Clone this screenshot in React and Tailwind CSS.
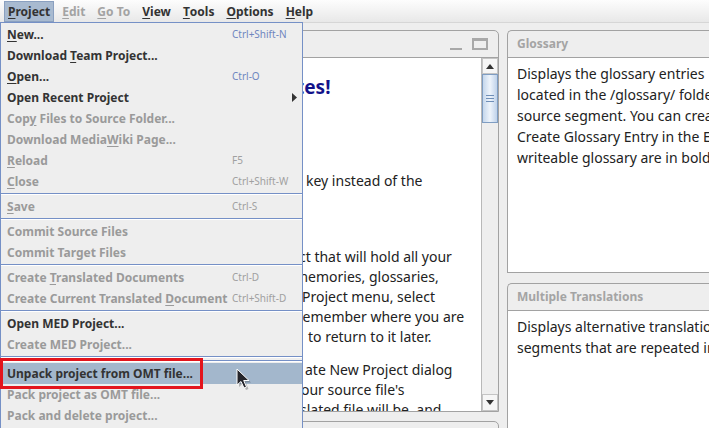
import React from "react";

const U = ({ children }) => (
  <span className="underline decoration-1 underline-offset-2">{children}</span>
);

function Item({ label, sc, dis, arrow, hl }) {
  return (
    <div className={`flex h-[21px] items-center pl-[6px] ${hl ? "bg-[#a3b7cc]" : ""}`}>
      <div
        className={`flex-1 whitespace-nowrap text-[12px] font-bold ${
          dis ? "text-[#9a9a9a]" : "text-[#333333]"
        }`}
      >
        {label}
      </div>
      <div
        className={`flex w-[70px] items-center whitespace-nowrap text-[10px] ${
          dis ? "text-[#a0a0a0]" : "text-[#6f86bf]"
        }`}
      >
        {sc}
        {arrow && (
          <svg width="6" height="9" viewBox="0 0 6 9" className="ml-[60px]">
            <path d="M0 0 L5 4.5 L0 9 Z" fill="#333" />
          </svg>
        )}
      </div>
    </div>
  );
}

const Sep = () => (
  <div className="flex h-[4px] flex-col justify-center">
    <div className="h-px bg-[#7590c6]" />
    <div className="h-px bg-white" />
  </div>
);

function Menu() {
  return (
    <div className="absolute left-0 top-[22px] h-[420px] w-[303px] border-x border-t border-[#7590c6] bg-[#eeeeee] pt-px">
      <Item label={<><U>N</U>ew...</>} sc="Ctrl+Shift-N" />
      <Item label={<>Download <U>T</U>eam Project...</>} />
      <Item label={<><U>O</U>pen...</>} sc="Ctrl-O" />
      <Item label="Open Recent Project" arrow />
      <Item label={<>Cop<U>y</U> Files to Source Folder...</>} dis />
      <Item label={<>Download Media<U>W</U>iki Page...</>} dis />
      <Item label={<><U>R</U>eload</>} sc="F5" dis />
      <Item label={<><U>C</U>lose</>} sc="Ctrl+Shift-W" dis />
      <Sep />
      <Item label={<><U>S</U>ave</>} sc="Ctrl-S" dis />
      <Sep />
      <Item label="Commit Source Files" dis />
      <Item label="Commit Target Files" dis />
      <Sep />
      <Item label={<>Create <U>T</U>ranslated Documents</>} sc="Ctrl-D" dis />
      <Item label={<>Create Current Translated <U>D</U>ocument</>} sc="Ctrl+Shift-D" dis />
      <Sep />
      <Item label="Open MED Project..." />
      <Item label="Create MED Project..." dis />
      <Sep />
      <Sep />
      <Item label="Unpack project from OMT file..." hl />
      <Item label="Pack project as OMT file..." dis />
      <Item label="Pack and delete project..." dis />
    </div>
  );
}

function MenuBar() {
  const items = [
    { l: <><U>P</U>roject</>, on: true },
    { l: <><U>E</U>dit</>, dis: true },
    { l: <><U>G</U>o To</>, dis: true },
    { l: <><U>V</U>iew</> },
    { l: <><U>T</U>ools</> },
    { l: <><U>O</U>ptions</> },
    { l: <><U>H</U>elp</> },
  ];
  return (
    <div className="flex h-[23px] items-stretch border-b border-[#d6d6d6] bg-gradient-to-b from-[#fdfdfd] to-[#e8e8e8] pl-[4px] pt-px">
      {items.map((it, i) => (
        <div
          key={i}
          className={`flex h-[21px] items-center whitespace-nowrap px-[3px] text-[12px] font-bold ${
            it.on ? "border border-[#8aa0c0] bg-[#a8bad0] text-[#333333]" : "border border-transparent"
          } ${it.dis ? "text-[#a3a3a3]" : "text-[#333333]"} ${i > 0 ? "ml-[4px]" : ""}`}
        >
          {it.l}
        </div>
      ))}
    </div>
  );
}

function Line({ ml, children, mt = 0 }) {
  return (
    <div
      className="h-[20px] whitespace-nowrap text-[14px] leading-[20px] text-[#222222]"
      style={{ marginLeft: ml, marginTop: mt }}
    >
      {children}
    </div>
  );
}

function Scrollbar() {
  return (
    <div className="flex w-[17px] shrink-0 flex-col border-l border-[#b8b8b8] bg-[#eeeeee]">
      <div className="flex h-[16px] items-center justify-center border border-[#c4c4c4] bg-[#f6f6f6]">
        <svg width="8" height="5" viewBox="0 0 8 5">
          <path d="M0 5 L4 0 L8 5 Z" fill="#333" />
        </svg>
      </div>
      <div className="flex h-[49px] flex-col items-center justify-center gap-[2px] border border-[#7f9dc2] bg-gradient-to-r from-[#c5d7ec] via-[#eef4fb] to-[#bfd2ea]">
        <div className="h-px w-[8px] bg-[#6f8fb8]" />
        <div className="h-px w-[8px] bg-[#6f8fb8]" />
        <div className="h-px w-[8px] bg-[#6f8fb8]" />
      </div>
      <div className="flex-1" />
      <div className="flex h-[17px] items-center justify-center border border-[#c4c4c4] bg-[#f6f6f6]">
        <svg width="8" height="5" viewBox="0 0 8 5">
          <path d="M0 0 L4 5 L8 0 Z" fill="#333" />
        </svg>
      </div>
    </div>
  );
}

function Editor() {
  return (
    <div className="flex h-[382px] flex-col rounded-t-[5px] border border-[#a2a2a2] bg-[#eeeeee]">
      <div className="flex h-[27px] shrink-0 items-center justify-end gap-[10px] border-b border-[#a2a2a2] pr-[10px]">
        <div className="mt-[10px] h-[2px] w-[12px] bg-[#a8a8a8]" />
        <div className="h-[12px] w-[16px] border-2 border-t-[3px] border-[#a8a8a8]" />
      </div>
      <div className="flex flex-1 overflow-hidden bg-white">
        <div className="flex-1 overflow-hidden">
          <div
            className="mt-[15px] h-[28px] whitespace-nowrap text-[19px] font-bold leading-[28px] text-[#12128a]"
            style={{ marginLeft: 287 }}
          >
            tes!
          </div>
          <Line ml={297} mt={70}>
            key instead of the
          </Line>
          <Line ml={290} mt={56}>
            ct that will hold all your
          </Line>
          <Line ml={286}>memories, glossaries,</Line>
          <Line ml={293}>Project menu, select</Line>
          <Line ml={288}>remember where you are</Line>
          <Line ml={299}>to return to it later.</Line>
          <Line ml={296} mt={13}>
            ate New Project dialog
          </Line>
          <Line ml={292}>our source file's</Line>
          <Line ml={291}>slated file will be, and</Line>
        </div>
        <Scrollbar />
      </div>
    </div>
  );
}

function Pane({ title, h, lines }) {
  return (
    <div
      className="flex flex-col rounded-tl-[5px] border-y border-l border-[#a2a2a2] bg-[#eeeeee]"
      style={{ height: h }}
    >
      <div className="flex h-[27px] shrink-0 items-center border-b border-[#a2a2a2] pl-[9px] text-[12px] font-bold text-[#a4a4a4]">
        {title}
      </div>
      <div className="flex-1 overflow-hidden bg-white pl-[9px] pt-[5px]">
        {lines.map((l, i) => (
          <div key={i} className="h-[21px] whitespace-nowrap text-[14px] leading-[21px] text-[#222222]">
            {l}
          </div>
        ))}
      </div>
    </div>
  );
}

export default function App() {
  return (
    <div
      className="relative h-[428px] w-[709px] overflow-hidden bg-[#eeeeee]"
      style={{ fontFamily: '"Noto Sans", "Open Sans", sans-serif' }}
    >
      <MenuBar />
      <div className="flex gap-[8px] pl-[8px] pt-[7px]">
        <div className="flex w-[491px] shrink-0 flex-col gap-[9px]">
          <Editor />
          <div className="h-[40px] rounded-t-[5px] border border-[#a2a2a2] bg-[#eeeeee]" />
        </div>
        <div className="flex w-[260px] shrink-0 flex-col gap-[10px]">
          <Pane
            title="Glossary"
            h={243}
            lines={[
              "Displays the glossary entries",
              "located in the /glossary/ folder that match the",
              "source segment. You can create entries with",
              "Create Glossary Entry in the Edit menu. Entries in the",
              "writeable glossary are in bold.",
            ]}
          />
          <Pane
            title="Multiple Translations"
            h={200}
            lines={[
              "Displays alternative translations for",
              "segments that are repeated in the project.",
            ]}
          />
        </div>
      </div>
      <Menu />
      <div className="absolute left-0 top-[358px] h-[31px] w-[203px] border-[3px] border-[#e3141c]" />
      <svg
        className="absolute left-[235px] top-[367px]"
        width="18"
        height="24"
        viewBox="0 0 18 24"
      >
        <path d="M3 3 L3 19 L7 15.5 L10 22 L12.5 21 L9.7 14.5 L15 14.5 Z" fill="#000" opacity="0.25" transform="translate(1,1)" />
        <path d="M2 2 L2 18 L6 14.5 L9 21 L11.5 20 L8.7 13.5 L14 13.5 Z" fill="#25252b" stroke="#ffffff" strokeWidth="1" />
      </svg>
    </div>
  );
}
